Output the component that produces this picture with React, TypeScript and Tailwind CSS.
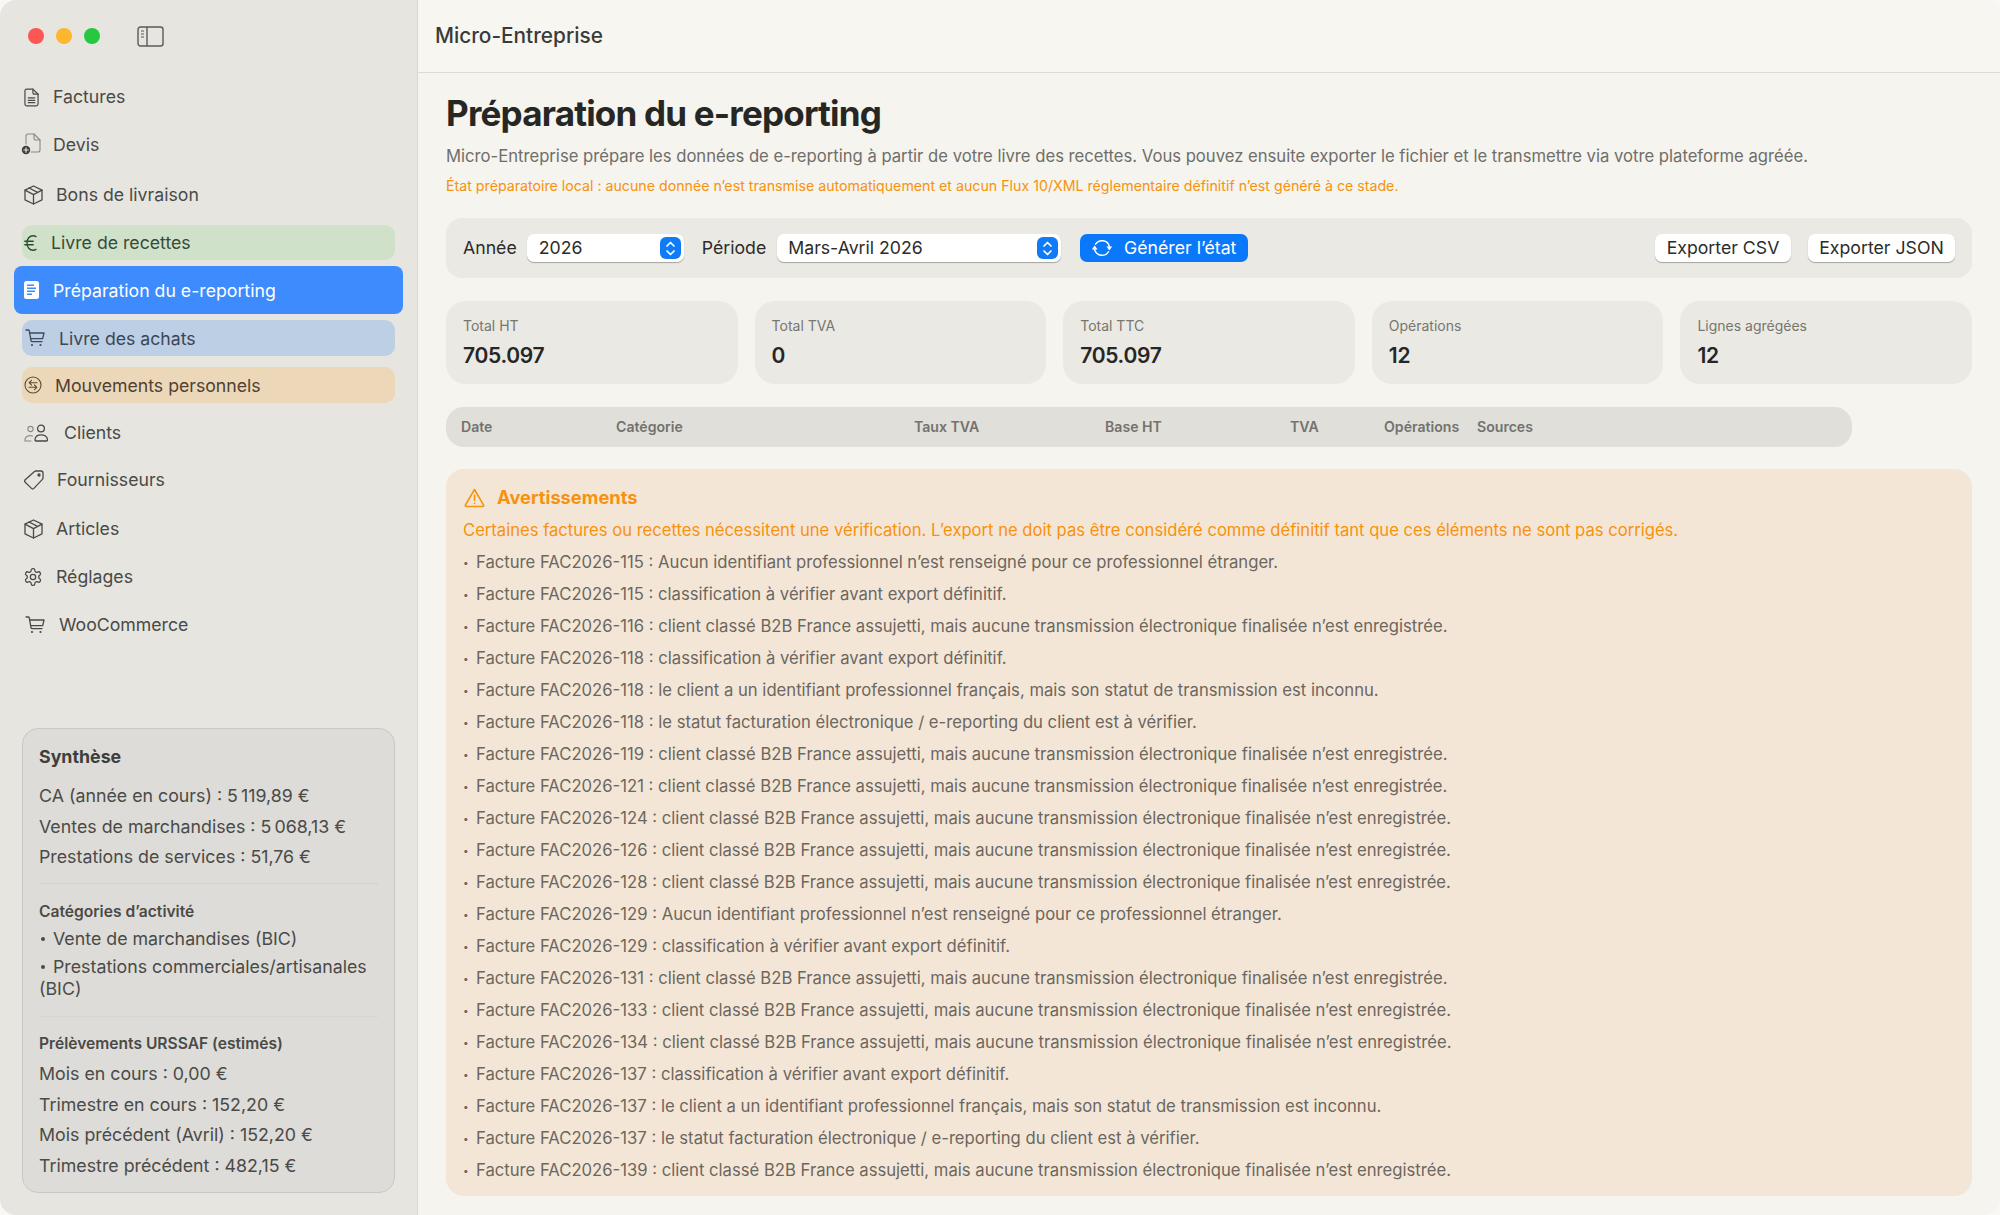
import React from "react";

const stroke = { fill: "none", stroke: "currentColor", strokeWidth: 1.3, strokeLinecap: "round", strokeLinejoin: "round" } as const;

const DocIcon = () => (
  <svg width="15" height="19" viewBox="0 0 16 20" {...stroke} className="text-[#4a4a48]">
    <path d="M3 1h6.5L15 6.5V17a2 2 0 0 1-2 2H3a2 2 0 0 1-2-2V3a2 2 0 0 1 2-2z" />
    <path d="M9.5 1v4a1.5 1.5 0 0 0 1.5 1.5h4" />
    <path d="M4.5 10.5h7M4.5 13h7M4.5 15.5h7" />
  </svg>
);
const DocPlusIcon = () => (
  <svg width="20" height="22" viewBox="0 0 20 22" fill="none" strokeLinecap="round" strokeLinejoin="round">
    <path d="M5 11V3a2 2 0 0 1 2-2h6l6 6v10a2 2 0 0 1-2 2h-7" stroke="#8a8a86" strokeWidth="1.1" />
    <path d="M13 1v4a2 2 0 0 0 2 2h4" stroke="#8a8a86" strokeWidth="1.1" />
    <circle cx="5" cy="17" r="4.2" fill="#3c3c3a" />
    <path d="M5 14.8v4.4M2.8 17h4.4" stroke="#e6e5df" strokeWidth="1.2" />
  </svg>
);
const BoxIcon = () => (
  <svg width="19" height="20" viewBox="0 0 19 20" {...stroke} className="text-[#4a4a48]">
    <path d="M9.5 1 18 5.2v9.6L9.5 19 1 14.8V5.2z" />
    <path d="M1 5.2 9.5 9.6 18 5.2M9.5 9.6V19M5 3l8.6 4.4" />
  </svg>
);
const CartIcon = ({ cls }: { cls: string }) => (
  <svg width="20" height="18" viewBox="0 0 20 18" {...stroke} className={cls}>
    <path d="M1 1h2.2c.6 0 1 .4 1.1.9L6 11.6c.1.6.6 1 1.2 1H17" />
    <path d="M4.6 4H19l-1.3 5.6H5.6" />
    <circle cx="7" cy="16" r="1.1" fill="currentColor" stroke="none" />
    <circle cx="15.5" cy="16" r="1.1" fill="currentColor" stroke="none" />
  </svg>
);
const ActiveDoc = () => (
  <svg width="15" height="18" viewBox="0 0 15 18">
    <rect x="0" y="0" width="15" height="18" rx="2.5" fill="#ffffff" />
    <path d="M3 3.5h7v1.6H3zM3 6.5h9v1.6H3zM3 9.5h8v1.6H3zM3 12.5h5v1.6H3z" fill="#3d8bfd" />
  </svg>
);
const EuroIcon = () => (
  <svg width="13" height="16" viewBox="0 0 13 16" fill="none" stroke="#2f4a33" strokeWidth="1.4" strokeLinecap="round">
    <path d="M12 1.6C11 1 10 .8 9 .8 5.6.8 3 3.8 3 8s2.6 7.2 6 7.2c1 0 2-.2 3-.8" />
    <path d="M.8 6.3h8.4M.8 9.7h8.4" />
  </svg>
);
const SwapIcon = () => (
  <svg width="18" height="18" viewBox="0 0 18 18" fill="none" stroke="#5b4a35" strokeWidth="1.1" strokeLinecap="round" strokeLinejoin="round">
    <circle cx="9" cy="9" r="8" />
    <path d="M13 6.7H5.2M7.5 4.4 5.2 6.7 7.5 9M5 11.3h7.8M10.5 9l2.3 2.3-2.3 2.3" />
  </svg>
);
const UsersIcon = () => (
  <svg width="25" height="18" viewBox="0 0 25 18" fill="none" strokeLinecap="round" strokeLinejoin="round">
    <circle cx="6.5" cy="5" r="2.6" stroke="#8a8a86" strokeWidth="1.1" />
    <path d="M1 17c-.5-3.5 2-5.4 5-5.4 1 0 1.7.2 2.5.5M1 17h6" stroke="#8a8a86" strokeWidth="1.1" />
    <circle cx="17" cy="4.5" r="3.4" stroke="#474745" strokeWidth="1.3" />
    <path d="M11 16c0-3.4 2.6-5.2 6-5.2s6.5 1.8 6.5 5.2c0 .7-.5 1-1 1H12c-.6 0-1-.3-1-1z" stroke="#474745" strokeWidth="1.3" />
  </svg>
);
const TagIcon = () => (
  <svg width="20" height="20" viewBox="0 0 20 20" {...stroke} className="text-[#4a4a48]">
    <path d="M12 1h5a2 2 0 0 1 2 2v5a2 2 0 0 1-.6 1.4l-8.5 9a1.7 1.7 0 0 1-2.4 0L1.2 12.2a1.7 1.7 0 0 1 0-2.4l9.3-8.2A2 2 0 0 1 12 1z" />
    <circle cx="15" cy="5" r="1" fill="currentColor" />
  </svg>
);
const GearIcon = () => (
  <svg width="20" height="20" viewBox="0 0 24 24" fill="none" stroke="#4a4a48" strokeWidth="1.5" strokeLinecap="round" strokeLinejoin="round">
    <path d="M12.22 2h-.44a2 2 0 0 0-2 2v.18a2 2 0 0 1-1 1.73l-.43.25a2 2 0 0 1-2 0l-.15-.08a2 2 0 0 0-2.73.73l-.22.38a2 2 0 0 0 .73 2.73l.15.1a2 2 0 0 1 1 1.72v.51a2 2 0 0 1-1 1.74l-.15.09a2 2 0 0 0-.73 2.73l.22.38a2 2 0 0 0 2.73.73l.15-.08a2 2 0 0 1 2 0l.43.25a2 2 0 0 1 1 1.73V20a2 2 0 0 0 2 2h.44a2 2 0 0 0 2-2v-.18a2 2 0 0 1 1-1.73l.43-.25a2 2 0 0 1 2 0l.15.08a2 2 0 0 0 2.73-.73l.22-.39a2 2 0 0 0-.73-2.73l-.15-.08a2 2 0 0 1-1-1.74v-.5a2 2 0 0 1 1-1.74l.15-.09a2 2 0 0 0 .73-2.73l-.22-.38a2 2 0 0 0-2.73-.73l-.15.08a2 2 0 0 1-2 0l-.43-.25a2 2 0 0 1-1-1.73V4a2 2 0 0 0-2-2z" />
    <circle cx="12" cy="12" r="3.2" />
  </svg>
);
const Stepper = () => (
  <span className="flex h-[22px] w-[21px] items-center justify-center rounded-[6px] bg-[#0f7bf7]">
    <svg width="11" height="17" viewBox="0 0 11 17" fill="none" stroke="#ffffff" strokeWidth="1.7" strokeLinecap="round" strokeLinejoin="round">
      <path d="M2 6 5.5 2.5 9 6M2 11l3.5 3.5L9 11" />
    </svg>
  </span>
);

type Row = { label: string; icon: React.ReactNode; cls: string; text: string };
const rows: Row[] = [
  { label: "Factures", icon: <DocIcon />, cls: "mt-[7px] h-[36px] mx-[22px] pl-[2px] text-[#4a4a47]", text: "ml-[14px] mt-[1px]" },
  { label: "Devis", icon: <DocPlusIcon />, cls: "mt-[11px] h-[36px] ml-[21px] mr-[22px] text-[#4a4a47]", text: "ml-[12px] mt-[2px]" },
  { label: "Bons de livraison", icon: <BoxIcon />, cls: "mt-[15px] h-[36px] mx-[22px] pl-[2px] text-[#4a4a47]", text: "ml-[13px] mt-[1px]" },
  { label: "Livre de recettes", icon: <EuroIcon />, cls: "mt-[12px] h-[35px] mx-[22px] pl-[2px] rounded-[10px] bg-[#cfe2c9] text-[#3a4a3a]", text: "ml-[14px] mt-[1px]" },
  { label: "Préparation du e-reporting", icon: <ActiveDoc />, cls: "mt-[6px] h-[48px] mx-[14px] pl-[10px] rounded-[8px] bg-[#3d8bfd] text-white", text: "ml-[14px] mt-[2px]" },
  { label: "Livre des achats", icon: <CartIcon cls="text-[#3c4a5c]" />, cls: "mt-[6px] h-[36px] mx-[22px] pl-[3px] rounded-[10px] bg-[#bccfe5] text-[#3c4654]", text: "ml-[14px] mt-[2px]" },
  { label: "Mouvements personnels", icon: <SwapIcon />, cls: "mt-[11px] h-[36px] mx-[22px] pl-[2px] rounded-[10px] bg-[#ecd8b9] text-[#4e4233]", text: "ml-[13px] mt-[2px]" },
  { label: "Clients", icon: <UsersIcon />, cls: "mt-[12px] h-[36px] mx-[22px] pl-[2px] text-[#4a4a47]", text: "ml-[15px]" },
  { label: "Fournisseurs", icon: <TagIcon />, cls: "mt-[11px] h-[36px] mx-[22px] pl-[2px] text-[#4a4a47]", text: "ml-[13px] mt-[1px]" },
  { label: "Articles", icon: <BoxIcon />, cls: "mt-[13px] h-[36px] mx-[22px] pl-[2px] text-[#4a4a47]", text: "ml-[13px]" },
  { label: "Réglages", icon: <GearIcon />, cls: "mt-[12px] h-[36px] mx-[22px] pl-[1px] text-[#4a4a47]", text: "ml-[13px] mt-[1px]" },
  { label: "WooCommerce", icon: <CartIcon cls="text-[#4a4a48]" />, cls: "mt-[12px] h-[36px] mx-[22px] pl-[3px] text-[#4a4a47]", text: "ml-[14px]" },
];

const client = "client classé B2B France assujetti, mais aucune transmission électronique finalisée n’est enregistrée.";
const classif = "classification à vérifier avant export définitif.";
const aucun = "Aucun identifiant professionnel n’est renseigné pour ce professionnel étranger.";
const identif = "le client a un identifiant professionnel français, mais son statut de transmission est inconnu.";
const statut = "le statut facturation électronique / e-reporting du client est à vérifier.";
const warnings: [string, string][] = [
  ["115", aucun], ["115", classif], ["116", client], ["118", classif], ["118", identif], ["118", statut],
  ["119", client], ["121", client], ["124", client], ["126", client], ["128", client], ["129", aucun],
  ["129", classif], ["131", client], ["133", client], ["134", client], ["137", classif], ["137", identif],
  ["137", statut], ["139", client],
];

const stats = [
  ["Total HT", "705.097"],
  ["Total TVA", "0"],
  ["Total TTC", "705.097"],
  ["Opérations", "12"],
  ["Lignes agrégées", "12"],
];

const columns = [
  ["Date", "w-[155px]"],
  ["Catégorie", "w-[298px]"],
  ["Taux TVA", "w-[191px]"],
  ["Base HT", "w-[185px]"],
  ["TVA", "w-[94px]"],
  ["Opérations", "w-[93px]"],
  ["Sources", ""],
];

export default function App() {
  return (
    <div className="h-[1215px] w-[2000px] overflow-hidden bg-[#f8f8f5] font-['Inter','Liberation_Sans',sans-serif]">
      <div className="flex h-full overflow-hidden rounded-[16px]">
        <aside className="flex h-full w-[418px] shrink-0 flex-col border-r border-[#d9d8d3] bg-[#e6e5df]">
          <div className="flex h-[72px] shrink-0 items-center pl-[28px]">
            <div className="flex items-center gap-[12px]">
              <span className="h-[16px] w-[16px] rounded-full bg-[#fc5753]" />
              <span className="h-[16px] w-[16px] rounded-full bg-[#fdb62e]" />
              <span className="h-[16px] w-[16px] rounded-full bg-[#27c83f]" />
              <svg width="27" height="21" viewBox="0 0 27 21" fill="none" stroke="#5a5a58" strokeWidth="1.4" className="ml-[25px]">
                <rect x="1" y="1" width="25" height="19" rx="2.5" />
                <path d="M10 1v19" />
                <path d="M4 5h3M4 8h3M4 11h3" strokeWidth="1.1" />
              </svg>
            </div>
          </div>
          <nav className="flex flex-col">
            {rows.map((r) => (
              <div key={r.label} className={`flex shrink-0 items-center text-[17.7px] ${r.cls}`}>
                {r.icon}
                <span className={r.text}>{r.label}</span>
              </div>
            ))}
          </nav>
          <section className="mx-[22px] mb-[22px] mt-auto flex h-[465px] flex-col rounded-[16px] border border-[#c9c8c3] bg-[#dddcd8] px-[16px] text-[17.8px] text-[#4a4a47]">
            <h3 className="mt-[16px] text-[17.8px] font-bold leading-[24px] text-[#3e3e3c]">Synthèse</h3>
            <p className="mt-[15px] leading-[24px]">CA (année en cours) : 5&#8239;119,89&nbsp;€</p>
            <p className="mt-[6.5px] leading-[24px]">Ventes de marchandises : 5&#8239;068,13&nbsp;€</p>
            <p className="mt-[6.5px] leading-[24px]">Prestations de services : 51,76&nbsp;€</p>
            <hr className="mt-[14px] border-t border-[#d2d1cc]" />
            <p className="mt-[18px] text-[15.6px] font-semibold leading-[20px]">Catégories d’activité</p>
            <p className="mt-[6px] leading-[22px]"><span className="mr-[8px] ml-[2px] inline-block h-[4px] w-[4px] rounded-full bg-[#4a4a47] align-[4px]" />Vente de marchandises (BIC)</p>
            <p className="mt-[6px] leading-[22px]"><span className="mr-[8px] ml-[2px] inline-block h-[4px] w-[4px] rounded-full bg-[#4a4a47] align-[4px]" />Prestations commerciales/artisanales (BIC)</p>
            <hr className="mt-[16px] border-t border-[#d6d5d0]" />
            <p className="mt-[17px] text-[15.6px] font-semibold leading-[20px]">Prélèvements URSSAF (estimés)</p>
            <p className="mt-[8px] leading-[24px]">Mois en cours : 0,00&nbsp;€</p>
            <p className="mt-[6.5px] leading-[24px]">Trimestre en cours : 152,20&nbsp;€</p>
            <p className="mt-[6.5px] leading-[24px]">Mois précédent (Avril) : 152,20&nbsp;€</p>
            <p className="mt-[6.5px] leading-[24px]">Trimestre précédent : 482,15&nbsp;€</p>
          </section>
        </aside>

        <main className="flex min-w-0 flex-1 flex-col bg-[#f5f4ee]">
          <header className="flex h-[73px] shrink-0 items-center border-b border-[#dcdbd6] bg-[#f7f6f1] pl-[17px] text-[20.8px] font-medium text-[#3a3a38]">
            Micro-Entreprise
          </header>
          <div className="flex flex-col pl-[28px] pr-[28px]">
            <h1 className="mt-[17px] text-[35px] font-bold leading-[46px] tracking-[-0.8px] text-[#262624]">Préparation du e-reporting</h1>
            <p className="mt-[8px] text-[16.65px] leading-[24px] text-[#6f6e6a]">
              Micro-Entreprise prépare les données de e-reporting à partir de votre livre des recettes. Vous pouvez ensuite exporter le fichier et le transmettre via votre plateforme agréée.
            </p>
            <p className="mt-[9px] text-[14.2px] leading-[18px] text-[#f7920f]">
              État préparatoire local : aucune donnée n’est transmise automatiquement et aucun Flux 10/XML réglementaire définitif n’est généré à ce stade.
            </p>

            <div className="mt-[23px] flex h-[60px] items-center rounded-[16px] bg-[#eae9e4] pl-[17px] pr-[17px] text-[17.7px] text-[#2c2c2a]">
              <span>Année</span>
              <div className="ml-[10px] flex h-[28px] w-[157px] items-center justify-between rounded-[7px] bg-white pl-[12px] pr-[3px] shadow-[0_1px_1px_rgba(0,0,0,0.3)]">
                2026 <Stepper />
              </div>
              <span className="ml-[18px]">Période</span>
              <div className="ml-[11px] flex h-[28px] w-[284px] items-center justify-between rounded-[7px] bg-white pl-[11px] pr-[3px] shadow-[0_1px_1px_rgba(0,0,0,0.3)]">
                Mars-Avril 2026 <Stepper />
              </div>
              <button className="ml-[19px] flex h-[28px] w-[168px] items-center justify-center gap-[12px] rounded-[7px] bg-[#0a78fb] text-white">
                <svg width="20" height="20" viewBox="0 0 20 20" fill="none" stroke="#ffffff" strokeWidth="1.5" strokeLinecap="round">
                  <path d="M3.6 6.2A7.6 7.6 0 0 1 17.4 8.6" />
                  <path d="M16.4 13.8A7.6 7.6 0 0 1 2.6 11.4" />
                  <path d="M14.5 8.6h5.6L17.3 12.4zM-.1 11.4h5.6L2.7 7.6z" fill="#ffffff" stroke="none" />
                </svg>
                Générer l’état
              </button>
              <button className="ml-auto h-[28px] w-[136px] rounded-[7px] bg-white shadow-[0_1px_1px_rgba(0,0,0,0.3)]">Exporter CSV</button>
              <button className="ml-[17px] h-[28px] w-[147px] rounded-[7px] bg-white shadow-[0_1px_1px_rgba(0,0,0,0.3)]">Exporter JSON</button>
            </div>

            <div className="mt-[23px] grid grid-cols-5 gap-[17px]">
              {stats.map(([k, v]) => (
                <div key={k} className="flex h-[83px] flex-col rounded-[20px] bg-[#eae9e4] pl-[17px] pt-[15px]">
                  <span className="text-[14px] leading-[20px] text-[#77766f]">{k}</span>
                  <span className="mt-[6px] text-[21px] font-semibold leading-[28px] tracking-[-0.3px] text-[#262624]">{v}</span>
                </div>
              ))}
            </div>

            <div className="mt-[23px] flex h-[40px] w-[1406px] items-center rounded-[18px] bg-[#e0dfda] pl-[15px] text-[14.1px] font-semibold text-[#73726d]">
              {columns.map(([c, w]) => (
                <span key={c} className={w}>{c}</span>
              ))}
            </div>

            <section className="mt-[22px] flex h-[727px] flex-col rounded-[18px] bg-[#f4e6d6] pl-[17px] pt-[16px]">
              <div className="flex h-[26px] items-center gap-[12px] text-[18.3px] font-bold text-[#f7920f]">
                <svg width="21" height="20" viewBox="0 0 21 20" fill="none" stroke="#f7920f" strokeWidth="1.6" strokeLinecap="round" strokeLinejoin="round" className="ml-[1px]">
                  <path d="M10.5 1.5 19.6 17.2a.9.9 0 0 1-.8 1.3H2.2a.9.9 0 0 1-.8-1.3z" />
                  <path d="M10.5 7.2v5.2M10.5 15.2v.2" />
                </svg>
                Avertissements
              </div>
              <p className="mt-[7px] text-[16.63px] leading-[24px] text-[#f7920f]">
                Certaines factures ou recettes nécessitent une vérification. L’export ne doit pas être considéré comme définitif tant que ces éléments ne sont pas corrigés.
              </p>
              <ul className="mt-[4px] flex flex-col">
                {warnings.map(([n, t], i) => (
                  <li key={i} className="flex h-[32px] text-[16.67px] leading-[32px] text-[#6b665f]">
                    <span className="w-[13px] text-[10px]">•</span>
                    <span>Facture FAC2026-{n} : {t}</span>
                  </li>
                ))}
              </ul>
            </section>
          </div>
        </main>
      </div>
    </div>
  );
}
